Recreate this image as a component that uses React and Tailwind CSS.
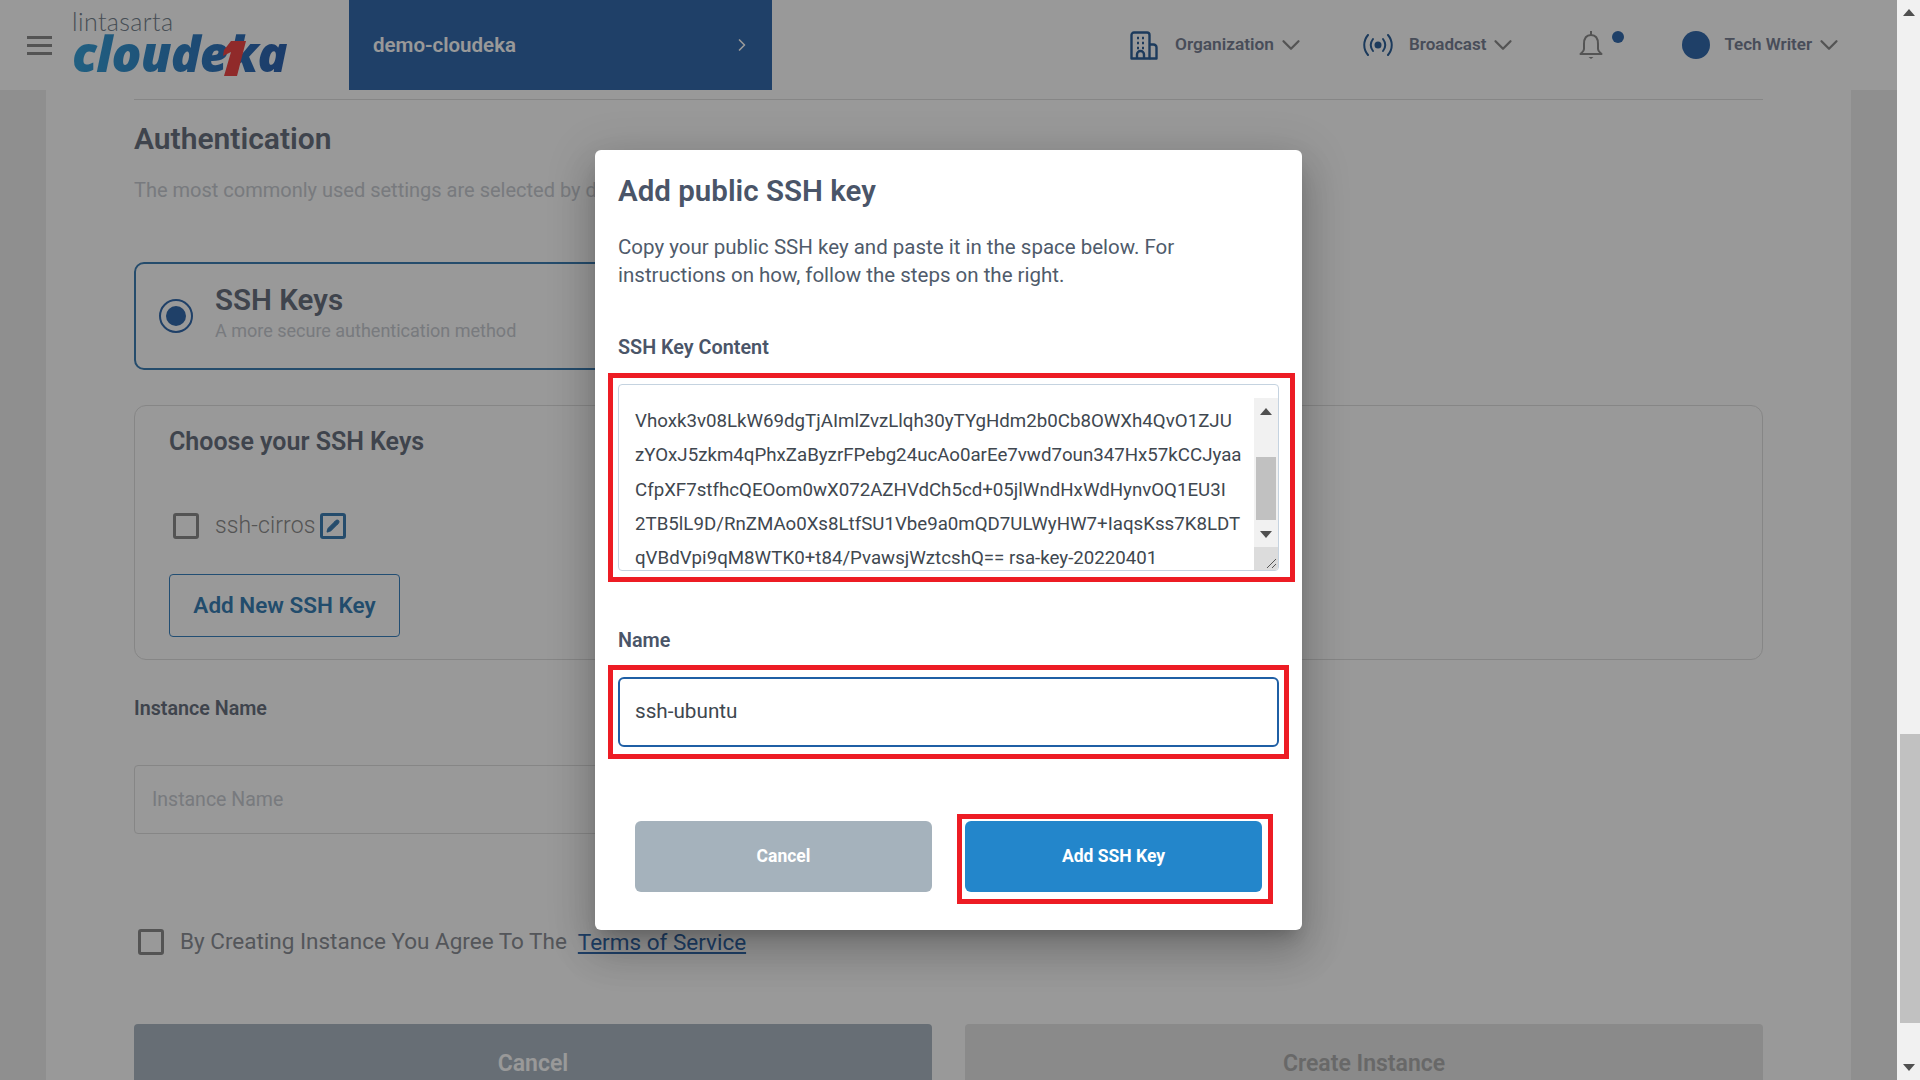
import React from 'react'
import { ChevronDown, ChevronRight, Pencil } from 'lucide-react'

const FONT = "font-['Roboto','Noto_Sans',sans-serif]"

const SSH_KEY = [
  'Vhoxk3v08LkW69dgTjAImlZvzLlqh30yTYgHdm2b0Cb8OWXh4QvO1ZJU',
  'zYOxJ5zkm4qPhxZaByzrFPebg24ucAo0arEe7vwd7oun347Hx57kCCJyaa',
  'CfpXF7stfhcQEOom0wX072AZHVdCh5cd+05jlWndHxWdHynvOQ1EU3I',
  '2TB5lL9D/RnZMAo0Xs8LtfSU1Vbe9a0mQD7ULWyHW7+IaqsKss7K8LDT',
  'qVBdVpi9qM8WTK0+t84/PvawsjWztcshQ== rsa-key-20220401',
]

const OrgIcon = () => (
  <svg width="28" height="29" viewBox="0 0 28 29" fill="none" stroke="#2f6299" strokeWidth="2.4" strokeLinejoin="round">
    <path d="M1.500 27.500V4a2.500 2.500 0 0 1 2.500-2.500h13A2.500 2.500 0 0 1 19.500 4v23.500z" />
    <path d="M19.500 13.500h4a3 3 0 0 1 3 3v11h-7" />
    <path d="M7 27.500v-4a3.500 3.500 0 0 1 7 0v4" />
    <path d="M7 7h2M12 7h2M7 12h2M12 12h2M7 17h2M12 17h2" strokeWidth="2.500" />
  </svg>
)

const BroadcastIcon = () => (
  <svg width="30" height="22" viewBox="0 0 30 22" fill="none" stroke="#2f6299" strokeWidth="2" strokeLinecap="round">
    <path d="M5 1C0 7 0 15 5 21M25 1c5 6 5 14 0 20" />
    <path d="M10 5c-3 4-3 8 0 12M20 5c3 4 3 8 0 12" />
    <circle cx="15" cy="11" r="3.500" fill="#2f6299" stroke="none" />
  </svg>
)

const BellIcon = () => (
  <svg width="24" height="28" viewBox="0 0 24 28" fill="none" stroke="#8c8c8c" strokeWidth="2" strokeLinejoin="round">
    <path d="M12 0v4" />
    <path d="M12 4C6.500 4 5 8.500 5 13v5c0 2.500-2 3.500-3.500 5h21c-1.500-1.500-3.500-2.500-3.500-5v-5c0-4.500-1.500-9-7-9z" />
    <path d="M9.500 26h5L12 28z" fill="#8c8c8c" stroke="none" />
  </svg>
)

const Logo = () => (
  <div className="relative flex flex-col w-[216px] h-[90px] ml-[20px] shrink-0">
    <span className="font-['Lato',sans-serif] font-light text-[25px] leading-[24px] mt-[9px] text-[#75828e] tracking-[0.4px]">lintasarta</span>
    <span className="font-['Open_Sans',sans-serif] font-extrabold italic text-[49.500px] leading-[40px] tracking-[-0.8px] bg-gradient-to-r from-[#37a0d8] to-[#2e63b0] bg-clip-text text-transparent">cloudeka</span>
    <svg className="absolute left-[147px] top-[41px]" width="28" height="36" viewBox="0 0 28 36">
      <path d="M12 0H27L18 35H5L12 11 4 15 5 9Z" fill="#f04646" />
    </svg>
  </div>
)

const Header = () => (
  <header className="flex items-center h-[90px] bg-white shrink-0">
    <button className="flex flex-col gap-[5px] w-[25px] ml-[27px] shrink-0">
      <span className="h-[3px] bg-[#8c8c8c]" />
      <span className="h-[3px] bg-[#8c8c8c]" />
      <span className="h-[3px] bg-[#8c8c8c]" />
    </button>
    <Logo />
    <div className="flex items-center justify-between w-[423px] h-full ml-[61px] pl-[24px] pr-[20px] bg-[#346bad] text-white shrink-0">
      <span className="text-[20.500px] font-semibold">demo-cloudeka</span>
      <ChevronRight size={20} />
    </div>
    <div className="flex items-center ml-[358px] text-[#788094]">
      <OrgIcon />
      <span className="ml-[17px] text-[17.300px] font-semibold">Organization</span>
      <ChevronDown size={30} strokeWidth={1.8} className="ml-[2px] text-[#8c8c8c]" />
      <div className="ml-[57px]"><BroadcastIcon /></div>
      <span className="ml-[16px] text-[17px] font-semibold">Broadcast</span>
      <ChevronDown size={30} strokeWidth={1.8} className="ml-[2px] text-[#8c8c8c]" />
      <div className="relative ml-[61px]">
        <BellIcon />
        <span className="absolute -right-[21px] top-0 w-[12px] h-[12px] rounded-full bg-[#346bad]" />
      </div>
      <span className="ml-[79px] w-[28px] h-[28px] rounded-full bg-[#346bad]" />
      <span className="ml-[14px] text-[17px] font-semibold">Tech Writer</span>
      <ChevronDown size={30} strokeWidth={1.8} className="ml-[2px] text-[#8c8c8c]" />
    </div>
  </header>
)

const Box = () => (
  <span className="w-[26px] h-[26px] border-[3px] border-[#8c8c8c] rounded-[3px] shrink-0" />
)

const Page = () => (
  <main className="flex-1 mx-[46px] bg-white pl-[88px] pr-[88px] overflow-hidden">
    <div className="h-px mt-[9px] bg-[#e0e0e0]" />
    <h2 className="mt-[22px] text-[30px] leading-[34px] font-semibold text-[#6a7280]">Authentication</h2>
    <p className="mt-[21px] text-[20px] leading-[26px] text-[#c8ccd2]">The most commonly used settings are selected by default.</p>

    <div className="flex items-center w-[798px] h-[108px] mt-[59px] border-2 border-[#3f7fb5] rounded-[10px]">
      <span className="flex items-center justify-center ml-[23px] w-[34px] h-[34px] rounded-full border-2 border-[#346bad]">
        <span className="w-[20px] h-[20px] rounded-full bg-[#346bad]" />
      </span>
      <div className="ml-[22px]">
        <div className="text-[29.500px] leading-[29px] font-semibold text-[#6a7280]">SSH Keys</div>
        <div className="text-[18px] leading-[31px] text-[#c8ccd2]">A more secure authentication method</div>
      </div>
    </div>

    <section className="h-[255px] mt-[35px] border border-[#e0e0e0] rounded-[12px] pl-[34px] pt-[19px]">
      <h3 className="text-[25px] leading-[34px] font-semibold text-[#6a7280]">Choose your SSH Keys</h3>
      <div className="flex items-center h-[26px] mt-[54px] ml-[4px]">
        <Box />
        <span className="ml-[16px] text-[23px] font-light tracking-[0.1px] text-[#8c8c8c]">ssh-cirros</span>
        <span className="flex items-center justify-center ml-[5px] w-[26px] h-[26px] border-[3px] border-[#3f7fb5] rounded-[3px] text-[#3f7fb5]">
          <Pencil size={14} fill="currentColor" />
        </span>
      </div>
      <button className="w-[231px] h-[63px] mt-[35px] border border-[#3a82c0] rounded-[4px] text-[22.500px] font-semibold text-[#3a7fb5]">Add New SSH Key</button>
    </section>

    <div className="mt-[37px] text-[19.700px] leading-[24px] font-semibold text-[#6a7280]">Instance Name</div>
    <div className="flex items-center w-[798px] h-[69px] mt-[44px] pl-[17px] border border-[#e0e0e0] rounded-[4px] text-[19.500px] text-[#c8ccd2]">Instance Name</div>

    <div className="flex items-center h-[26px] mt-[95px] ml-[4px]">
      <Box />
      <span className="ml-[16px] text-[22.500px] text-[#8c9097]">By Creating Instance You Agree To The</span>
      <a className="ml-[11px] mt-[2px] text-[22.500px] text-[#346bad] underline">Terms of Service</a>
    </div>

    <div className="grid grid-cols-2 gap-[33px] mt-[69px]">
      <button className="h-[80px] bg-[#acb8c3] rounded-[4px] text-[23px] font-semibold text-white">Cancel</button>
      <button className="h-[80px] bg-[#e6e6e6] rounded-[4px] text-[23px] font-semibold text-[#aeaeae]">Create Instance</button>
    </div>
  </main>
)

const RedBox = ({ className }) => <span className={`absolute border-[5px] border-[#ed1c24] pointer-events-none ${className}`} />

const Modal = () => (
  <div className="absolute inset-0 flex items-center justify-center bg-black/40">
    <div className="flex flex-col w-[707px] h-[780px] px-[23px] pt-[24px] bg-white rounded-[6px] shadow-[0_11px_15px_-7px_rgba(0,0,0,0.2),0_24px_38px_3px_rgba(0,0,0,0.14),0_9px_46px_8px_rgba(0,0,0,0.12)]">
      <h2 className="text-[29.500px] leading-[34px] font-semibold text-[#4a5568]">Add public SSH key</h2>
      <p className="mt-[25px] text-[20.500px] leading-[28px] text-[#4f5b6b] whitespace-nowrap">
        Copy your public SSH key and paste it in the space below. For<br />
        instructions on how, follow the steps on the right.
      </p>
      <label className="mt-[47px] text-[19.800px] leading-[24px] font-semibold text-[#4a5568]">SSH Key Content</label>
      <div className="relative w-[661px] h-[187px] mt-[24px] shrink-0">
        <div className="flex h-full border border-[#c5d3e0] rounded-[4px] overflow-hidden">
          <div className="flex-1 pl-[16px] pt-[19px] text-[18.700px] leading-[34.300px] text-[#40474f] overflow-hidden whitespace-nowrap">
            {SSH_KEY.map((line) => <div key={line}>{line}</div>)}
          </div>
          <div className="flex flex-col items-center w-[24px] mt-[13px] bg-[#f1f1f1]">
            <span className="mt-[10px] w-0 h-0 border-x-[6px] border-x-transparent border-b-[7px] border-b-[#505050]" />
            <span className="w-[20px] h-[63px] mt-[42px] bg-[#c1c1c1]" />
            <span className="mt-[11px] w-0 h-0 border-x-[6px] border-x-transparent border-t-[7px] border-t-[#505050]" />
            <span className="relative flex-1 w-full mt-[9px] bg-[#dcdcdc]">
              <svg className="absolute right-[1px] bottom-[1px]" width="12" height="12" viewBox="0 0 12 12" stroke="#555" fill="none"><path d="M2 11 11 2M7 11l4-4" /></svg>
            </span>
          </div>
        </div>
        <RedBox className="-left-[10px] -right-[16px] -top-[11px] -bottom-[11px]" />
      </div>
      <label className="mt-[58px] text-[19.800px] leading-[24px] font-semibold text-[#4a5568]">Name</label>
      <div className="relative w-[661px] h-[70px] mt-[24px] shrink-0">
        <div className="flex items-center h-full pl-[15px] border-2 border-[#1f5fa5] rounded-[6px] text-[20.700px] text-[#40474f]">ssh-ubuntu</div>
        <RedBox className="-left-[10px] -right-[10px] -top-[12px] -bottom-[12px]" />
      </div>
      <div className="grid grid-cols-2 gap-[33px] mt-[74px] mx-[17px]">
        <button className="h-[71px] pb-[1px] bg-[#a5b2bc] rounded-[6px] text-[17.500px] font-bold text-white">Cancel</button>
        <div className="relative">
          <button className="w-full h-[71px] pb-[1px] bg-[#2386cb] rounded-[6px] text-[17.500px] font-bold text-white">Add SSH Key</button>
          <RedBox className="-left-[8px] -right-[11px] -top-[7px] -bottom-[12px]" />
        </div>
      </div>
    </div>
  </div>
)

const Scrollbar = () => (
  <aside className="flex flex-col items-center w-[23px] bg-[#f1f1f1] shrink-0">
    <span className="mt-[9px] w-0 h-0 border-x-[6px] border-x-transparent border-b-[7px] border-b-[#505050]" />
    <span className="w-[20px] h-[289px] mt-[718px] ml-[2px] bg-[#c1c1c1]" />
    <span className="mt-[41px] w-0 h-0 border-x-[6px] border-x-transparent border-t-[7px] border-t-[#505050]" />
  </aside>
)

export default function App() {
  return (
    <div className={`flex w-[1920px] h-[1080px] overflow-hidden ${FONT}`}>
      <div className="relative flex-1 flex flex-col bg-[#eeeeee] overflow-hidden">
        <Header />
        <Page />
        <Modal />
      </div>
      <Scrollbar />
    </div>
  )
}
